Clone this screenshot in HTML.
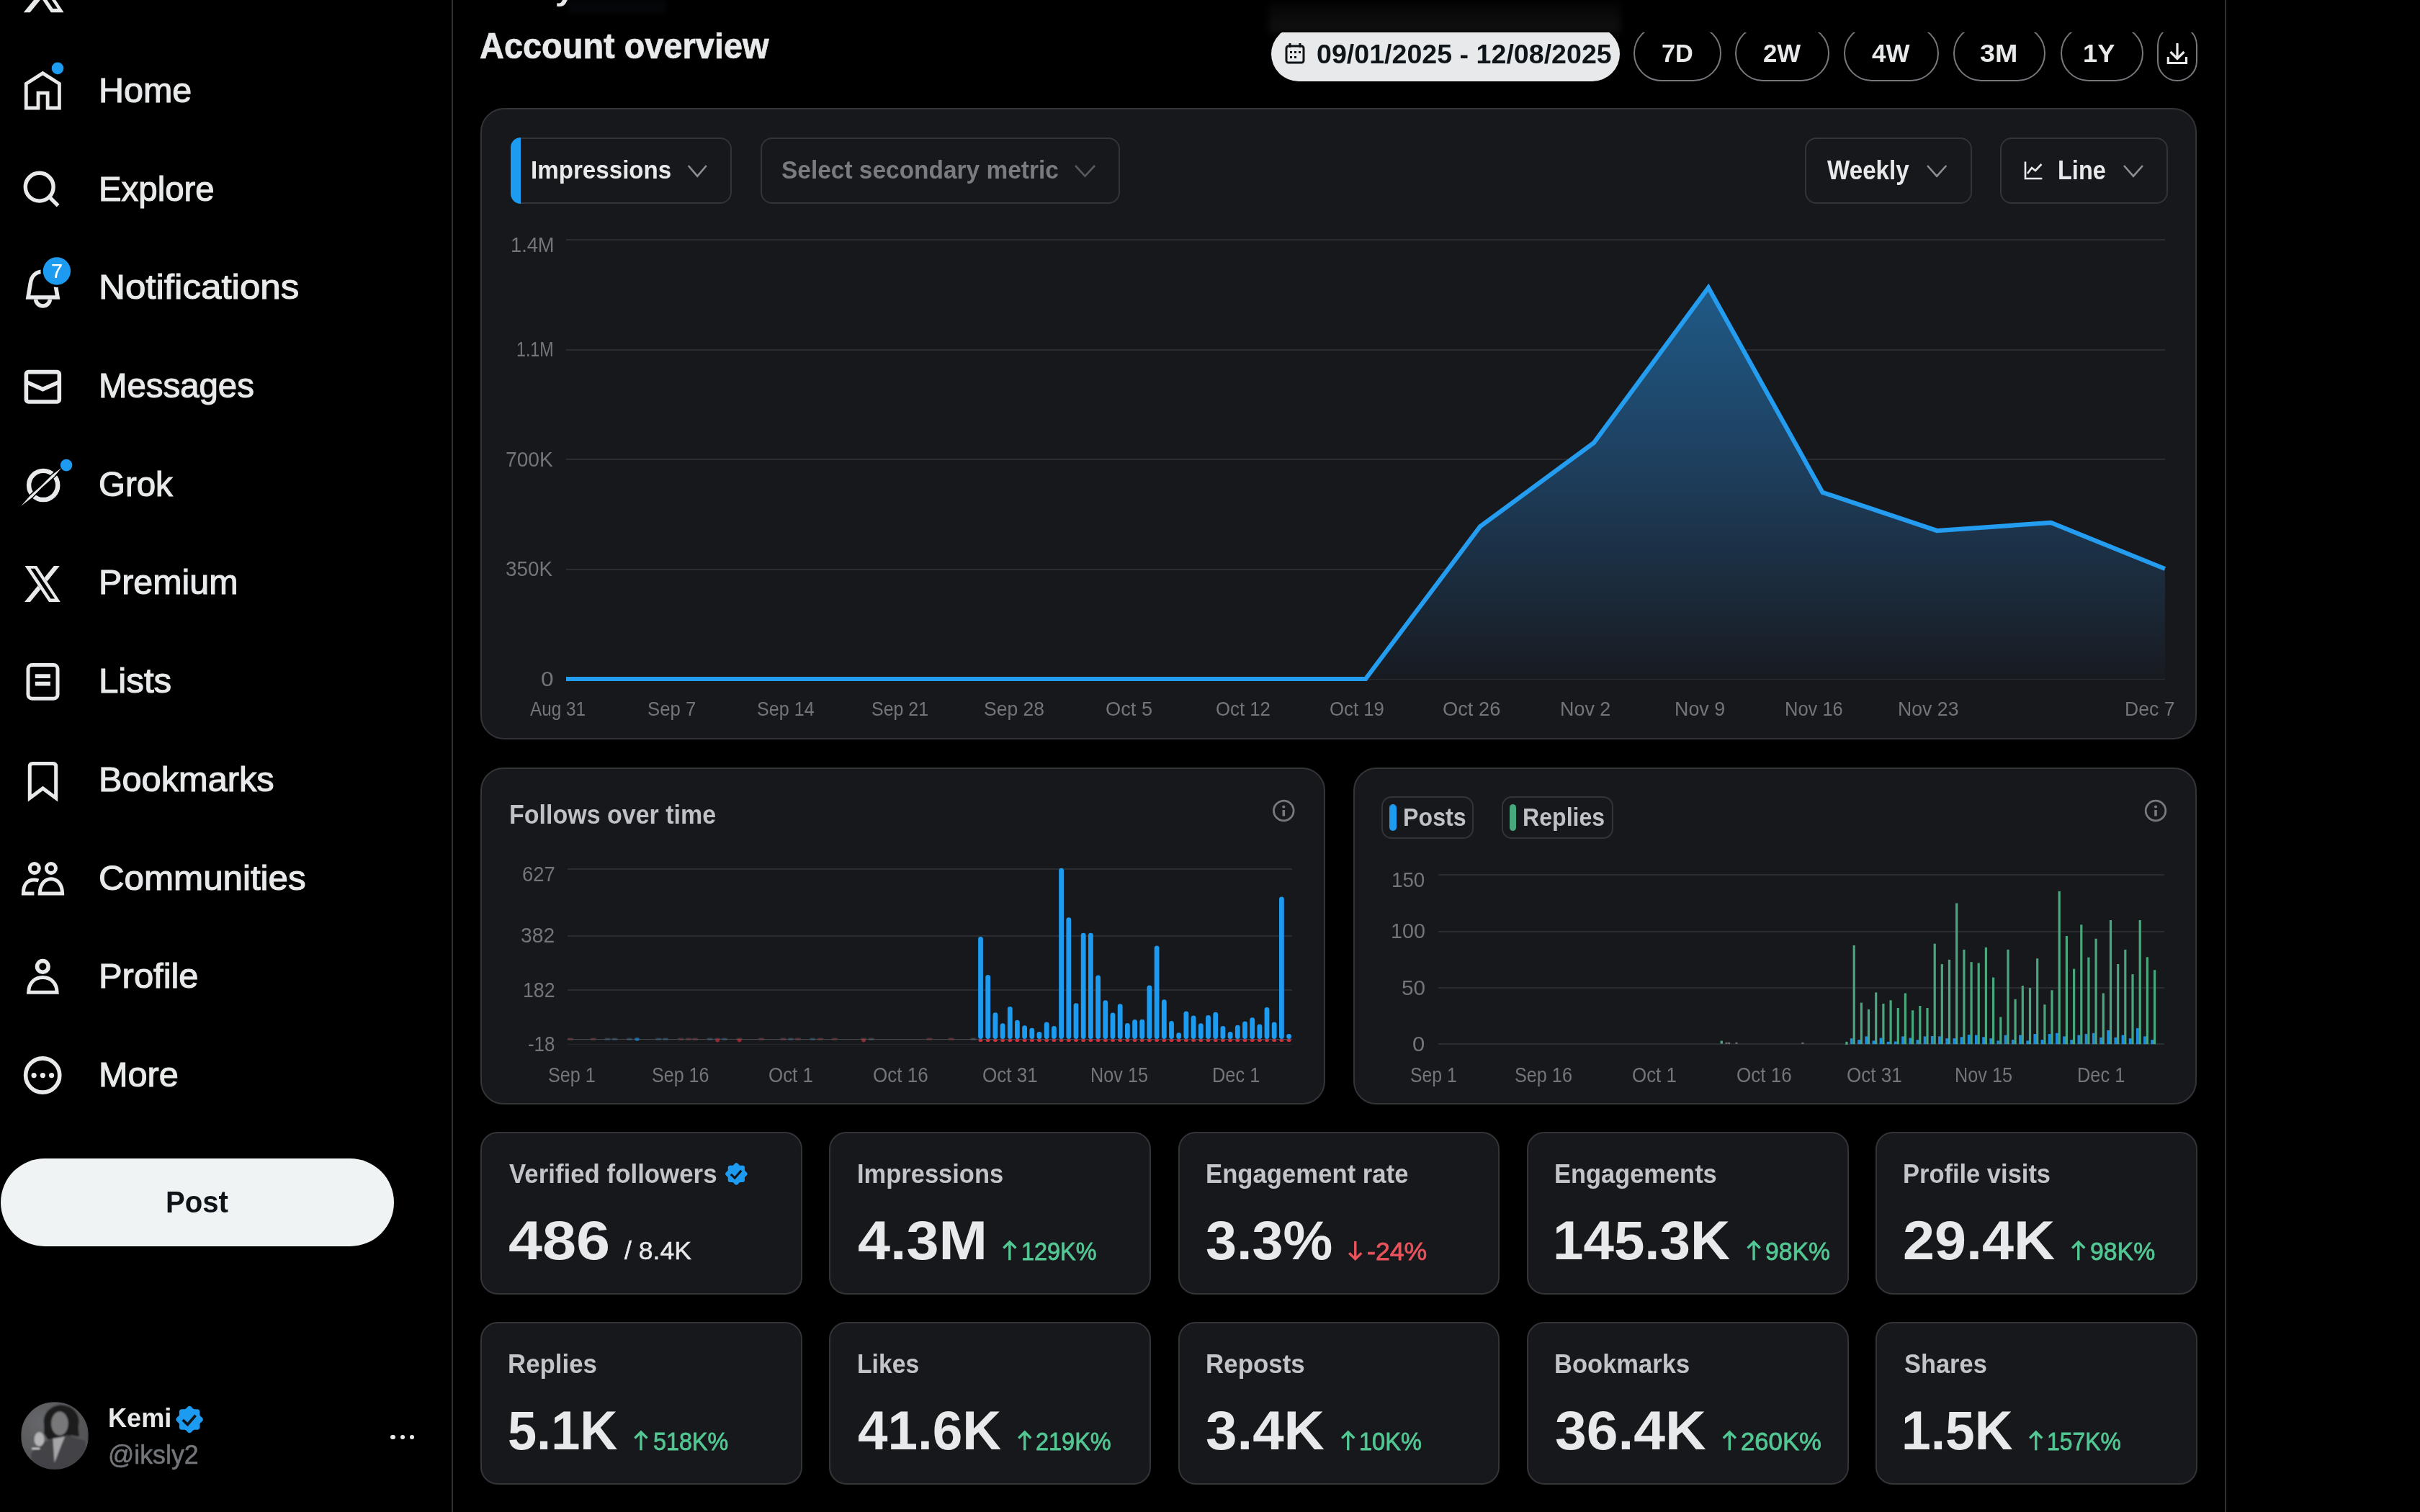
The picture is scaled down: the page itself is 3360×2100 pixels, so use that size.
<!DOCTYPE html><html><head><meta charset="utf-8"><style>
html,body{margin:0;padding:0;background:#000;width:3360px;height:2100px;overflow:hidden;position:relative;font-family:"Liberation Sans",sans-serif}
.t{position:absolute;white-space:nowrap;line-height:1;transform-origin:0 0;font-family:"Liberation Sans",sans-serif}
svg{position:absolute}
</style></head><body>
<div class="t" style="left:137.1px;top:101.9px;font-size:47.82px;color:#e7e9ea;transform:scaleX(1.0135);-webkit-text-stroke:1.1px #e7e9ea">Home</div>
<div class="t" style="left:137.2px;top:238.6px;font-size:47.82px;color:#e7e9ea;transform:scaleX(0.9911);-webkit-text-stroke:1.1px #e7e9ea">Explore</div>
<div class="t" style="left:136.9px;top:375.3px;font-size:47.82px;color:#e7e9ea;transform:scaleX(1.0687);-webkit-text-stroke:1.1px #e7e9ea">Notifications</div>
<div class="t" style="left:137.2px;top:512.0px;font-size:47.82px;color:#e7e9ea;transform:scaleX(0.9905);-webkit-text-stroke:1.1px #e7e9ea">Messages</div>
<div class="t" style="left:137.2px;top:648.7px;font-size:47.82px;color:#e7e9ea;transform:scaleX(0.9923);-webkit-text-stroke:1.1px #e7e9ea">Grok</div>
<div class="t" style="left:137.1px;top:785.4px;font-size:47.82px;color:#e7e9ea;transform:scaleX(1.0114);-webkit-text-stroke:1.1px #e7e9ea">Premium</div>
<div class="t" style="left:137.0px;top:922.1px;font-size:47.82px;color:#e7e9ea;transform:scaleX(1.0294);-webkit-text-stroke:1.1px #e7e9ea">Lists</div>
<div class="t" style="left:137.1px;top:1058.8px;font-size:47.82px;color:#e7e9ea;transform:scaleX(1.0190);-webkit-text-stroke:1.1px #e7e9ea">Bookmarks</div>
<div class="t" style="left:136.8px;top:1195.5px;font-size:47.82px;color:#e7e9ea;transform:scaleX(1.0310);-webkit-text-stroke:1.1px #e7e9ea">Communities</div>
<div class="t" style="left:137.0px;top:1332.2px;font-size:47.82px;color:#e7e9ea;transform:scaleX(1.0224);-webkit-text-stroke:1.1px #e7e9ea">Profile</div>
<div class="t" style="left:137.1px;top:1468.9px;font-size:47.82px;color:#e7e9ea;transform:scaleX(1.0164);-webkit-text-stroke:1.1px #e7e9ea">More</div>
<svg style="position:absolute;left:0px;top:0px;overflow:visible" width="130" height="1560" viewBox="0 0 130 1560"><path fill-rule="evenodd" fill="#e7e9ea" d="M33.30,-38.70 51.89,-38.70 88.52,17.30 70.82,17.30Z M42.26,-34.56 48.87,-34.56 80.00,12.04 73.40,12.04Z"/><polygon fill="#e7e9ea" points="78.55,-38.70 87.40,-38.70 67.68,-14.56 63.76,-20.56"/><polygon fill="#e7e9ea" points="53.68,-8.24 57.72,-2.30 41.64,17.30 32.80,17.30"/><path d="M36.3 150 V116.2 L59.35 101.64 L82.4 116.2 V150 H66.1 V129.2 H53 V150 Z" fill="none" stroke="#e7e9ea" stroke-width="4.8" stroke-linejoin="miter"/><circle cx="80" cy="94.9" r="8.3" fill="#1d9bf0"/><circle cx="54.7" cy="259.7" r="19.4" fill="none" stroke="#e7e9ea" stroke-width="5.4" stroke-linejoin="miter"/><path d="M68.3 273.3 L80.6 285.6" fill="none" stroke="#e7e9ea" stroke-width="5.4" stroke-linejoin="miter"/><path d="M39 413 L42.2 394 C43.5 383 50 377.3 59.5 377.3 C69 377.3 75.5 383 76.8 394 L80 413 Z" fill="none" stroke="#e7e9ea" stroke-width="5.6" stroke-linejoin="miter"/><path d="M49.6 416 A9.95 9.95 0 0 0 69.4 416" fill="none" stroke="#e7e9ea" stroke-width="5.5" stroke-linejoin="miter"/><circle cx="78.9" cy="376.5" r="22.5" fill="#000"/><circle cx="78.9" cy="376.5" r="19.2" fill="#1d9bf0"/><rect x="36.4" y="516.6" width="45.9" height="41.4" rx="3" fill="none" stroke="#e7e9ea" stroke-width="5.6" stroke-linejoin="miter"/><path d="M36.4 530.5 L59.35 540.6 L82.3 530.5" fill="none" stroke="#e7e9ea" stroke-width="5.6" stroke-linejoin="miter"/><circle cx="60.15" cy="673.97" r="20.07" fill="none" stroke="#e7e9ea" stroke-width="6.4"/><polygon fill="#000" points="38.16,698.69 81.75,657.68 77.37,653.02 33.77,694.03"/><polygon fill="#e7e9ea" points="29.26,702.67 44.53,690.91 57.96,677.18 75.27,661.99 85.15,650.09 72.67,659.22 56.45,675.58 41.93,688.14"/><circle cx="92.1" cy="646.1" r="8.3" fill="#1d9bf0"/><path fill-rule="evenodd" fill="#e7e9ea" d="M34.50,786.10 51.10,786.10 83.80,836.10 68.00,836.10Z M42.50,789.80 48.40,789.80 76.20,831.40 70.30,831.40Z"/><polygon fill="#e7e9ea" points="74.90,786.10 82.80,786.10 65.20,807.65 61.70,802.30"/><polygon fill="#e7e9ea" points="52.70,813.30 56.30,818.60 41.95,836.10 34.05,836.10"/><rect x="39" y="923.6" width="41" height="46.6" rx="5.5" fill="none" stroke="#e7e9ea" stroke-width="5.0" stroke-linejoin="miter"/><path d="M48.8 939.2 H69.9 M48.8 949.7 H69.9" fill="none" stroke="#e7e9ea" stroke-width="5.7" stroke-linejoin="miter"/><path d="M41.3 1108.5 V1064.6 Q41.3 1060.6 45.3 1060.6 H73.7 Q77.7 1060.6 77.7 1064.6 V1108.5 L59.5 1094.9 Z" fill="none" stroke="#e7e9ea" stroke-width="5.0" stroke-linejoin="miter"/><circle cx="47.8" cy="1206" r="6.5" fill="none" stroke="#e7e9ea" stroke-width="5.0" stroke-linejoin="miter"/><circle cx="70.9" cy="1206" r="6.5" fill="none" stroke="#e7e9ea" stroke-width="5.0" stroke-linejoin="miter"/><path d="M47.4 1240.9 H32.4 C32.4 1228 38.5 1222 47.5 1222 C49.5 1222 51.5 1222.3 53.5 1223" fill="none" stroke="#e7e9ea" stroke-width="5.0" stroke-linejoin="miter"/><path d="M55.2 1240.9 C55.5 1229 61.5 1220.8 70.9 1220.8 C80.3 1220.8 86.3 1229 86.6 1240.9 Z" fill="none" stroke="#e7e9ea" stroke-width="5.0" stroke-linejoin="miter"/><circle cx="59.35" cy="1342.4" r="7.8" fill="none" stroke="#e7e9ea" stroke-width="5.6" stroke-linejoin="miter"/><path d="M39.6 1378.2 C40 1365 48 1357.6 59.35 1357.6 C70.7 1357.6 78.7 1365 79.1 1378.2 Z" fill="none" stroke="#e7e9ea" stroke-width="5.0" stroke-linejoin="miter"/><circle cx="59.2" cy="1493.5" r="23.6" fill="none" stroke="#e7e9ea" stroke-width="5.6" stroke-linejoin="miter"/><circle cx="47.1" cy="1493.6" r="3.6" fill="#e7e9ea"/><circle cx="59.35" cy="1493.6" r="3.6" fill="#e7e9ea"/><circle cx="71.6" cy="1493.6" r="3.6" fill="#e7e9ea"/></svg>
<div class="t" style="left:70.5px;top:362.6px;font-size:27.62px;color:#fff;transform:scaleX(1.0482);-webkit-text-stroke:0.2px #fff">7</div>
<div style="position:absolute;left:1.0px;top:1609.4px;width:545.8px;height:122.0px;border-radius:61px;background:#eff3f4"></div>
<div class="t" style="left:230.2px;top:1649.4px;font-size:42.30px;font-weight:700;color:#0f1419;transform:scaleX(0.9491);">Post</div>
<svg style="position:absolute;left:28.65px;top:1947px" width="94" height="94" viewBox="-47 -47 94 94">
<defs><clipPath id="avc"><circle cx="0" cy="0" r="47"/></clipPath>
<radialGradient id="avbg" cx="0.3" cy="0.3" r="0.9"><stop offset="0" stop-color="#66676a"/><stop offset="1" stop-color="#4c4d50"/></radialGradient><filter id="avb" x="-10%" y="-10%" width="120%" height="120%"><feGaussianBlur stdDeviation="0.9"/></filter></defs>
<g clip-path="url(#avc)"><g filter="url(#avb)">
<rect x="-47" y="-47" width="94" height="94" fill="url(#avbg)"/>
<ellipse cx="9.09" cy="-19.79" rx="24.5" ry="23" fill="#1c1c1e"/>
<polygon points="-14.91,-3.06 -9.09,5.67 17.10,-1.60 33.83,1.31 31.65,-23.43 -14.91,-23.43" fill="#1c1c1e"/>
<ellipse cx="6.91" cy="-16.88" rx="11.8" ry="16.5" fill="#78787a"/>
<polygon points="-33.83,47.87 -32.38,24.59 -21.46,11.50 -0.36,3.49 17.10,-0.87 41.83,7.13 47.65,47.87" fill="#434346"/>
<polygon points="-2.55,4.22 14.19,1.31 9.82,11.50 -0.36,37.69" fill="#a5a5a7"/>
<ellipse cx="-21.46" cy="4.95" rx="7" ry="10" fill="#b4b4b6"/>
<rect x="-31.65" y="16.95" width="11" height="2" fill="#d8d8d8"/>
</g></g></svg>
<div class="t" style="left:149.5px;top:1951.1px;font-size:37.06px;font-weight:700;color:#e7e9ea;transform:scaleX(0.9753);">Kemi</div>
<svg style="position:absolute;left:0px;top:0px;overflow:visible" width="300" height="2100" viewBox="0 0 300 2100"><polygon points="281.90,1971.50 281.65,1972.72 280.95,1973.85 279.97,1974.86 278.94,1975.75 278.08,1976.58 277.52,1977.47 277.29,1978.50 277.31,1979.70 277.40,1981.06 277.38,1982.46 277.07,1983.75 276.39,1984.79 275.35,1985.47 274.06,1985.78 272.66,1985.80 271.30,1985.71 270.10,1985.69 269.07,1985.92 268.18,1986.48 267.35,1987.34 266.46,1988.37 265.45,1989.35 264.32,1990.05 263.10,1990.30 261.88,1990.05 260.75,1989.35 259.74,1988.37 258.85,1987.34 258.02,1986.48 257.13,1985.92 256.10,1985.69 254.90,1985.71 253.54,1985.80 252.14,1985.78 250.85,1985.47 249.81,1984.79 249.13,1983.75 248.82,1982.46 248.80,1981.06 248.89,1979.70 248.91,1978.50 248.68,1977.47 248.12,1976.58 247.26,1975.75 246.23,1974.86 245.25,1973.85 244.55,1972.72 244.30,1971.50 244.55,1970.28 245.25,1969.15 246.23,1968.14 247.26,1967.25 248.12,1966.42 248.68,1965.53 248.91,1964.50 248.89,1963.30 248.80,1961.94 248.82,1960.54 249.13,1959.25 249.81,1958.21 250.85,1957.53 252.14,1957.22 253.54,1957.20 254.90,1957.29 256.10,1957.31 257.13,1957.08 258.02,1956.52 258.85,1955.66 259.74,1954.63 260.75,1953.65 261.88,1952.95 263.10,1952.70 264.32,1952.95 265.45,1953.65 266.46,1954.63 267.35,1955.66 268.18,1956.52 269.07,1957.08 270.10,1957.31 271.30,1957.29 272.66,1957.20 274.06,1957.22 275.35,1957.53 276.39,1958.21 277.07,1959.25 277.38,1960.54 277.40,1961.94 277.31,1963.30 277.29,1964.50 277.52,1965.53 278.08,1966.42 278.94,1967.25 279.97,1968.14 280.95,1969.15 281.65,1970.28" fill="#1d9bf0"/><path d="M253.70 1972.06 L260.47 1978.46 L271.56 1965.86" fill="none" stroke="#0f1419" stroke-width="3.76"/></svg>
<div class="t" style="left:149.7px;top:2001.6px;font-size:37.06px;color:#737579;transform:scaleX(0.9652);-webkit-text-stroke:0.6px #71767b">@iksly2</div>
<div style="position:absolute;left:542.2px;top:1992.5px;width:6.6px;height:6.6px;border-radius:50%;background:#e7e9ea"></div>
<div style="position:absolute;left:555.5px;top:1992.5px;width:6.6px;height:6.6px;border-radius:50%;background:#e7e9ea"></div>
<div style="position:absolute;left:568.8px;top:1992.5px;width:6.6px;height:6.6px;border-radius:50%;background:#e7e9ea"></div>
<div style="position:absolute;left:627.0px;top:0.0px;width:2.0px;height:2100.0px;background:#2f3336"></div>
<div style="position:absolute;left:3088.5px;top:0.0px;width:2.0px;height:2100.0px;background:#2f3336"></div>
<div class="t" style="left:666.4px;top:40.2px;font-size:49.13px;font-weight:700;color:#e7e9ea;transform:scaleX(0.9550);-webkit-text-stroke:0.7px #e7e9ea">Account overview</div>
<div style="position:absolute;left:1765.0px;top:37.0px;width:484.3px;height:75.5px;border-radius:38px;background:#e7e9ea"></div>
<svg style="position:absolute;left:0px;top:0px;overflow:visible" width="1820" height="100" viewBox="0 0 1820 100"><rect x="1786" y="64" width="24" height="23" rx="3" fill="none" stroke="#0f1419" stroke-width="3"/><path d="M1791 60 V66 M1805 60 V66" stroke="#0f1419" stroke-width="3"/><rect x="1791" y="71" width="3" height="3" fill="#0f1419"/><rect x="1797" y="71" width="3" height="3" fill="#0f1419"/><rect x="1803" y="71" width="3" height="3" fill="#0f1419"/><rect x="1791" y="78" width="3" height="3" fill="#0f1419"/><rect x="1797" y="78" width="3" height="3" fill="#0f1419"/></svg>
<div class="t" style="left:1827.6px;top:56.6px;font-size:37.06px;font-weight:700;color:#0f1419;transform:scaleX(1.0148);">09/01/2025 - 12/08/2025</div>
<div style="position:absolute;left:2268.0px;top:35.0px;width:122.3px;height:78.0px;box-sizing:border-box;border:2px solid #75787d;border-radius:39px;"></div>
<div class="t" style="left:2306.9px;top:56.8px;font-size:35.61px;font-weight:700;color:#e7e9ea;transform:scaleX(0.9627);">7D</div>
<div style="position:absolute;left:2409.0px;top:35.0px;width:130.5px;height:78.0px;box-sizing:border-box;border:2px solid #75787d;border-radius:39px;"></div>
<div class="t" style="left:2447.8px;top:56.8px;font-size:35.61px;font-weight:700;color:#e7e9ea;transform:scaleX(0.9769);">2W</div>
<div style="position:absolute;left:2559.5px;top:35.0px;width:132.5px;height:78.0px;box-sizing:border-box;border:2px solid #75787d;border-radius:39px;"></div>
<div class="t" style="left:2599.1px;top:56.8px;font-size:35.61px;font-weight:700;color:#e7e9ea;transform:scaleX(0.9827);">4W</div>
<div style="position:absolute;left:2712.0px;top:35.0px;width:128.0px;height:78.0px;box-sizing:border-box;border:2px solid #75787d;border-radius:39px;"></div>
<div class="t" style="left:2749.2px;top:56.8px;font-size:35.61px;font-weight:700;color:#e7e9ea;transform:scaleX(1.0568);">3M</div>
<div style="position:absolute;left:2860.5px;top:35.0px;width:115.0px;height:78.0px;box-sizing:border-box;border:2px solid #75787d;border-radius:39px;"></div>
<div class="t" style="left:2892.4px;top:56.8px;font-size:35.61px;font-weight:700;color:#e7e9ea;transform:scaleX(1.0169);">1Y</div>
<div style="position:absolute;left:2994.5px;top:35.0px;width:56.0px;height:78.0px;box-sizing:border-box;border:2px solid #75787d;border-radius:39px;"></div>
<svg style="position:absolute;left:0px;top:0px;overflow:visible" width="3100" height="120" viewBox="0 0 3100 120"><path d="M3023 60 V81 M3013.5 72 L3023 81.5 L3032.5 72" fill="none" stroke="#e7e9ea" stroke-width="3.2"/><path d="M3010.3 79 V87.5 H3035.5 V79" fill="none" stroke="#e7e9ea" stroke-width="3.2"/></svg>
<div style="position:absolute;left:629.0px;top:0.0px;width:2459.5px;height:45.0px;background:#000"></div>
<div style="position:absolute;left:1762.0px;top:4.0px;width:488.0px;height:41.0px;background:linear-gradient(to bottom, rgba(255,255,255,0.02), rgba(255,255,255,0.065));filter:blur(5px)"></div>
<div style="position:absolute;left:789.0px;top:0.0px;width:135.0px;height:18.0px;background:rgba(20,24,34,0.25);filter:blur(3px)"></div>
<div class="t" style="left:666.1px;top:-37.6px;font-size:45.06px;font-weight:700;color:#e7e9ea;transform:scaleX(1.0737);">Analytics</div>
<div style="position:absolute;left:667.0px;top:150.0px;width:2383.0px;height:877.0px;box-sizing:border-box;border:2px solid #323438;border-radius:33px;background:#17181c"></div>
<div style="position:absolute;left:709.0px;top:191.0px;width:307.0px;height:91.5px;box-sizing:border-box;border:2px solid #323438;border-radius:16px;"></div>
<div style="position:absolute;left:709.0px;top:191.0px;width:14.0px;height:91.5px;background:#1d9bf0;border-radius:16px 0 0 16px"></div>
<div class="t" style="left:736.6px;top:218.5px;font-size:35.61px;font-weight:700;color:#e7e9ea;transform:scaleX(0.9309);">Impressions</div>
<svg style="position:absolute;left:0px;top:0px;overflow:visible" width="3100" height="300" viewBox="0 0 3100 300"><path d="M955.7 230 L968.25 244.7 L980.8 230" fill="none" stroke="#8b8f94" stroke-width="2.6"/></svg>
<div style="position:absolute;left:1056.0px;top:191.0px;width:498.5px;height:91.5px;box-sizing:border-box;border:2px solid #323438;border-radius:16px;"></div>
<div class="t" style="left:1085.1px;top:218.5px;font-size:35.61px;font-weight:700;color:#7a7b7f;transform:scaleX(0.9393);">Select secondary metric</div>
<svg style="position:absolute;left:0px;top:0px;overflow:visible" width="3100" height="300" viewBox="0 0 3100 300"><path d="M1493 230 L1506.5 244.7 L1520 230" fill="none" stroke="#58595d" stroke-width="2.6"/></svg>
<div style="position:absolute;left:2506.0px;top:191.0px;width:232.4px;height:91.5px;box-sizing:border-box;border:2px solid #323438;border-radius:16px;"></div>
<div class="t" style="left:2537.4px;top:218.8px;font-size:36.05px;font-weight:700;color:#e7e9ea;transform:scaleX(0.9204);">Weekly</div>
<svg style="position:absolute;left:0px;top:0px;overflow:visible" width="3100" height="300" viewBox="0 0 3100 300"><path d="M2676 230 L2689.15 244.7 L2702.3 230" fill="none" stroke="#8b8f94" stroke-width="2.6"/></svg>
<div style="position:absolute;left:2777.0px;top:191.0px;width:233.4px;height:91.5px;box-sizing:border-box;border:2px solid #323438;border-radius:16px;"></div>
<svg style="position:absolute;left:0px;top:0px;overflow:visible" width="3100" height="300" viewBox="0 0 3100 300"><path d="M2812 224.5 V248 H2835.4" fill="none" stroke="#e7e9ea" stroke-width="2.6"/><path d="M2815 241 L2821 233 L2826 237 L2834.5 228" fill="none" stroke="#e7e9ea" stroke-width="2.6"/></svg>
<div class="t" style="left:2857.3px;top:218.8px;font-size:36.05px;font-weight:700;color:#e7e9ea;transform:scaleX(0.9020);">Line</div>
<svg style="position:absolute;left:0px;top:0px;overflow:visible" width="3100" height="300" viewBox="0 0 3100 300"><path d="M2949 230 L2962.0 244.7 L2975 230" fill="none" stroke="#8b8f94" stroke-width="2.6"/></svg>
<div style="position:absolute;left:786.0px;top:332.0px;width:2220.0px;height:2.0px;background:#2a2c30"></div>
<div style="position:absolute;left:786.0px;top:484.5px;width:2220.0px;height:2.0px;background:#2a2c30"></div>
<div style="position:absolute;left:786.0px;top:637.0px;width:2220.0px;height:2.0px;background:#2a2c30"></div>
<div style="position:absolute;left:786.0px;top:789.5px;width:2220.0px;height:2.0px;background:#2a2c30"></div>
<div style="position:absolute;left:786.0px;top:942.0px;width:2220.0px;height:2.0px;background:#2a2c30"></div>
<div class="t" style="left:708.6px;top:325.7px;font-size:28.63px;color:#737579;transform:scaleX(0.9517);">1.4M</div>
<div class="t" style="left:717.2px;top:471.2px;font-size:28.63px;color:#737579;transform:scaleX(0.8114);">1.1M</div>
<div class="t" style="left:701.6px;top:623.7px;font-size:28.63px;color:#737579;transform:scaleX(0.9829);">700K</div>
<div class="t" style="left:702.3px;top:776.2px;font-size:28.63px;color:#737579;transform:scaleX(0.9716);">350K</div>
<div class="t" style="left:750.6px;top:928.7px;font-size:28.63px;color:#737579;transform:scaleX(1.1059);">0</div>
<div class="t" style="left:736.2px;top:971.4px;font-size:27.91px;color:#737579;transform:scaleX(0.8706);">Aug 31</div>
<div class="t" style="left:899.2px;top:971.4px;font-size:27.91px;color:#737579;transform:scaleX(0.9214);">Sep 7</div>
<div class="t" style="left:1051.3px;top:971.4px;font-size:27.91px;color:#737579;transform:scaleX(0.8999);">Sep 14</div>
<div class="t" style="left:1210.4px;top:971.4px;font-size:27.91px;color:#737579;transform:scaleX(0.8941);">Sep 21</div>
<div class="t" style="left:1366.4px;top:971.4px;font-size:27.91px;color:#737579;transform:scaleX(0.9504);">Sep 28</div>
<div class="t" style="left:1534.5px;top:971.4px;font-size:27.91px;color:#737579;transform:scaleX(0.9752);">Oct 5</div>
<div class="t" style="left:1687.8px;top:971.4px;font-size:27.91px;color:#737579;transform:scaleX(0.9229);">Oct 12</div>
<div class="t" style="left:1846.3px;top:971.4px;font-size:27.91px;color:#737579;transform:scaleX(0.9241);">Oct 19</div>
<div class="t" style="left:2002.6px;top:971.4px;font-size:27.91px;color:#737579;transform:scaleX(0.9780);">Oct 26</div>
<div class="t" style="left:2165.9px;top:971.4px;font-size:27.91px;color:#737579;transform:scaleX(0.9637);">Nov 2</div>
<div class="t" style="left:2324.5px;top:971.4px;font-size:27.91px;color:#737579;transform:scaleX(0.9622);">Nov 9</div>
<div class="t" style="left:2477.8px;top:971.4px;font-size:27.91px;color:#737579;transform:scaleX(0.9135);">Nov 16</div>
<div class="t" style="left:2634.5px;top:971.4px;font-size:27.91px;color:#737579;transform:scaleX(0.9559);">Nov 23</div>
<div class="t" style="left:2950.1px;top:971.4px;font-size:27.91px;color:#737579;transform:scaleX(0.9551);">Dec 7</div>
<svg style="position:absolute;left:0;top:0" width="3360" height="1100" viewBox="0 0 3360 1100">
<defs><linearGradient id="ag" x1="0" y1="400" x2="0" y2="942" gradientUnits="userSpaceOnUse">
<stop offset="0" stop-color="#1f5a87"/><stop offset="0.45" stop-color="#1e3f5e"/><stop offset="1" stop-color="#181b21"/></linearGradient></defs>
<polygon points="786.0,943.0 944.6,943.0 1103.1,943.0 1261.7,943.0 1420.3,943.0 1578.8,943.0 1737.4,943.0 1896.0,943.0 2055.1,731.2 2212.9,615.1 2372.0,399.5 2530.5,683.9 2689.3,737.0 2847.6,726.0 3005.9,790.0 3005.9,943 786,943" fill="url(#ag)"/>
<polyline points="786.0,943.0 944.6,943.0 1103.1,943.0 1261.7,943.0 1420.3,943.0 1578.8,943.0 1737.4,943.0 1896.0,943.0 2055.1,731.2 2212.9,615.1 2372.0,399.5 2530.5,683.9 2689.3,737.0 2847.6,726.0 3005.9,790.0" fill="none" stroke="#249cf0" stroke-width="6.2" stroke-linejoin="miter"/>
</svg>
<div style="position:absolute;left:667.0px;top:1065.5px;width:1172.5px;height:468.5px;box-sizing:border-box;border:2px solid #323438;border-radius:32px;background:#17181c"></div>
<div class="t" style="left:706.8px;top:1113.7px;font-size:36.92px;font-weight:700;color:#bfc1c5;transform:scaleX(0.9211);">Follows over time</div>
<svg style="position:absolute;left:0px;top:0px;overflow:visible" width="3360" height="2100" viewBox="0 0 3360 2100"><circle cx="1782.3" cy="1126" r="13.8" fill="none" stroke="#76797e" stroke-width="2.8"/><circle cx="1782.3" cy="1120.5" r="2.1" fill="#76797e"/><path d="M1782.3 1125 V1133.5" stroke="#76797e" stroke-width="3.6"/></svg>
<div style="position:absolute;left:788.0px;top:1205.8px;width:1005.5px;height:2.0px;background:#2a2c30"></div>
<div style="position:absolute;left:788.0px;top:1298.5px;width:1005.5px;height:2.0px;background:#2a2c30"></div>
<div style="position:absolute;left:788.0px;top:1373.8px;width:1005.5px;height:2.0px;background:#2a2c30"></div>
<div style="position:absolute;left:788.0px;top:1449.7px;width:1005.5px;height:1.6px;background:#25272b"></div>
<div class="t" style="left:724.5px;top:1200.4px;font-size:28.63px;color:#737579;transform:scaleX(0.9600);">627</div>
<div class="t" style="left:723.3px;top:1284.7px;font-size:28.63px;color:#737579;transform:scaleX(0.9858);">382</div>
<div class="t" style="left:725.8px;top:1361.1px;font-size:28.63px;color:#737579;transform:scaleX(0.9331);">182</div>
<div class="t" style="left:732.7px;top:1436.4px;font-size:28.63px;color:#737579;transform:scaleX(0.9039);">-18</div>
<div class="t" style="left:760.5px;top:1478.5px;font-size:28.78px;color:#737579;transform:scaleX(0.8749);">Sep 1</div>
<div class="t" style="left:905.2px;top:1478.5px;font-size:28.78px;color:#737579;transform:scaleX(0.8721);">Sep 16</div>
<div class="t" style="left:1066.9px;top:1478.5px;font-size:28.78px;color:#737579;transform:scaleX(0.9005);">Oct 1</div>
<div class="t" style="left:1211.6px;top:1478.5px;font-size:28.78px;color:#737579;transform:scaleX(0.9046);">Oct 16</div>
<div class="t" style="left:1363.9px;top:1478.5px;font-size:28.78px;color:#737579;transform:scaleX(0.9065);">Oct 31</div>
<div class="t" style="left:1514.3px;top:1478.5px;font-size:28.78px;color:#737579;transform:scaleX(0.8772);">Nov 15</div>
<div class="t" style="left:1683.4px;top:1478.5px;font-size:28.78px;color:#737579;transform:scaleX(0.8820);">Dec 1</div>
<div style="position:absolute;left:788.0px;top:1442.5px;width:1005.5px;height:1.5px;background:#45474b"></div>
<svg style="position:absolute;left:0;top:0;opacity:0.65" width="3360" height="2100"><rect x="787.5" y="1441.4" width="9" height="3.6" rx="1.8" fill="#46494d"/><rect x="789.5" y="1442.4" width="5" height="1.8" fill="#9a3038"/><rect x="819.1" y="1441.4" width="9" height="3.6" rx="1.8" fill="#46494d"/><rect x="821.1" y="1442.4" width="5" height="1.8" fill="#9a3038"/><rect x="839.0" y="1441.4" width="9" height="3.6" rx="1.8" fill="#46494d"/><rect x="841.0" y="1442.4" width="5" height="1.8" fill="#2a6a9c"/><rect x="848.9" y="1441.4" width="9" height="3.6" rx="1.8" fill="#46494d"/><rect x="850.9" y="1442.4" width="5" height="1.8" fill="#2a6a9c"/><rect x="869.4" y="1441.4" width="9" height="3.6" rx="1.8" fill="#46494d"/><rect x="871.4" y="1442.4" width="5" height="1.8" fill="#2a6a9c"/><rect x="880.0" y="1441.4" width="9" height="3.6" rx="1.8" fill="#46494d"/><ellipse cx="884.5" cy="1443.5" rx="2.8" ry="2.4" fill="#1d8fe0"/><rect x="909.7" y="1441.4" width="9" height="3.6" rx="1.8" fill="#46494d"/><rect x="911.7" y="1442.4" width="5" height="1.8" fill="#2a6a9c"/><rect x="919.6" y="1441.4" width="9" height="3.6" rx="1.8" fill="#46494d"/><rect x="921.6" y="1442.4" width="5" height="1.8" fill="#2a6a9c"/><rect x="940.8" y="1441.4" width="9" height="3.6" rx="1.8" fill="#46494d"/><rect x="942.8" y="1442.4" width="5" height="1.8" fill="#9a3038"/><rect x="951.4" y="1441.4" width="9" height="3.6" rx="1.8" fill="#46494d"/><rect x="953.4" y="1442.4" width="5" height="1.8" fill="#9a3038"/><rect x="960.6" y="1441.4" width="9" height="3.6" rx="1.8" fill="#46494d"/><rect x="962.6" y="1442.4" width="5" height="1.8" fill="#9a3038"/><rect x="981.1" y="1441.4" width="9" height="3.6" rx="1.8" fill="#46494d"/><rect x="983.1" y="1442.4" width="5" height="1.8" fill="#2a6a9c"/><rect x="991.7" y="1441.4" width="9" height="3.6" rx="1.8" fill="#46494d"/><ellipse cx="996.2" cy="1445.0" rx="2.8" ry="2.4" fill="#d0343f"/><rect x="1001.6" y="1441.4" width="9" height="3.6" rx="1.8" fill="#46494d"/><rect x="1003.6" y="1442.4" width="5" height="1.8" fill="#2a6a9c"/><rect x="1022.1" y="1441.4" width="9" height="3.6" rx="1.8" fill="#46494d"/><ellipse cx="1026.6" cy="1445.0" rx="2.8" ry="2.4" fill="#d0343f"/><rect x="1052.5" y="1441.4" width="9" height="3.6" rx="1.8" fill="#46494d"/><rect x="1054.5" y="1442.4" width="5" height="1.8" fill="#9a3038"/><rect x="1082.9" y="1441.4" width="9" height="3.6" rx="1.8" fill="#46494d"/><rect x="1084.9" y="1442.4" width="5" height="1.8" fill="#9a3038"/><rect x="1093.4" y="1441.4" width="9" height="3.6" rx="1.8" fill="#46494d"/><rect x="1095.4" y="1442.4" width="5" height="1.8" fill="#2a6a9c"/><rect x="1103.4" y="1441.4" width="9" height="3.6" rx="1.8" fill="#46494d"/><rect x="1105.4" y="1442.4" width="5" height="1.8" fill="#9a3038"/><rect x="1123.8" y="1441.4" width="9" height="3.6" rx="1.8" fill="#46494d"/><rect x="1125.8" y="1442.4" width="5" height="1.8" fill="#2a6a9c"/><rect x="1134.4" y="1441.4" width="9" height="3.6" rx="1.8" fill="#46494d"/><rect x="1136.4" y="1442.4" width="5" height="1.8" fill="#9a3038"/><rect x="1154.3" y="1441.4" width="9" height="3.6" rx="1.8" fill="#46494d"/><rect x="1156.3" y="1442.4" width="5" height="1.8" fill="#9a3038"/><rect x="1194.6" y="1441.4" width="9" height="3.6" rx="1.8" fill="#46494d"/><ellipse cx="1199.1" cy="1445.0" rx="2.8" ry="2.4" fill="#d0343f"/><rect x="1205.2" y="1441.4" width="9" height="3.6" rx="1.8" fill="#46494d"/><rect x="1207.2" y="1442.4" width="5" height="1.8" fill="#5a5d61"/><rect x="1285.8" y="1441.4" width="9" height="3.6" rx="1.8" fill="#46494d"/><rect x="1287.8" y="1442.4" width="5" height="1.8" fill="#9a3038"/><rect x="1316.2" y="1441.4" width="9" height="3.6" rx="1.8" fill="#46494d"/><rect x="1318.2" y="1442.4" width="5" height="1.8" fill="#9a3038"/><rect x="1346.7" y="1441.4" width="9" height="3.6" rx="1.8" fill="#46494d"/><rect x="1348.7" y="1442.4" width="5" height="1.8" fill="#5a5d61"/></svg>
<svg style="position:absolute;left:0;top:0" width="3360" height="2100"><rect x="1358.1" y="1301.1" width="6.8" height="141.9" rx="3.4" fill="#1d9bf0"/><rect x="1358.5" y="1443.3" width="6" height="3.6" rx="1.8" fill="#c9343e"/><rect x="1368.3" y="1354.0" width="6.8" height="89.0" rx="3.4" fill="#1d9bf0"/><rect x="1368.7" y="1443.3" width="6" height="3.6" rx="1.8" fill="#c9343e"/><rect x="1378.5" y="1406.3" width="6.8" height="36.7" rx="3.4" fill="#1d9bf0"/><rect x="1378.9" y="1443.3" width="6" height="3.6" rx="1.8" fill="#c9343e"/><rect x="1388.7" y="1421.3" width="6.8" height="21.7" rx="3.4" fill="#1d9bf0"/><rect x="1389.1" y="1443.3" width="6" height="3.6" rx="1.8" fill="#c9343e"/><rect x="1398.9" y="1398.1" width="6.8" height="44.9" rx="3.4" fill="#1d9bf0"/><rect x="1399.3" y="1443.3" width="6" height="3.6" rx="1.8" fill="#c9343e"/><rect x="1409.0" y="1416.7" width="6.8" height="26.3" rx="3.4" fill="#1d9bf0"/><rect x="1409.4" y="1443.3" width="6" height="3.6" rx="1.8" fill="#c9343e"/><rect x="1419.2" y="1424.3" width="6.8" height="18.7" rx="3.4" fill="#1d9bf0"/><rect x="1419.6" y="1443.3" width="6" height="3.6" rx="1.8" fill="#c9343e"/><rect x="1429.4" y="1427.7" width="6.8" height="15.3" rx="3.4" fill="#1d9bf0"/><rect x="1429.8" y="1443.3" width="6" height="3.6" rx="1.8" fill="#c9343e"/><rect x="1439.6" y="1432.9" width="6.8" height="10.1" rx="3.4" fill="#1d9bf0"/><rect x="1440.0" y="1443.3" width="6" height="3.6" rx="1.8" fill="#c9343e"/><rect x="1449.8" y="1419.6" width="6.8" height="23.4" rx="3.4" fill="#1d9bf0"/><rect x="1450.2" y="1443.3" width="6" height="3.6" rx="1.8" fill="#c9343e"/><rect x="1460.0" y="1425.1" width="6.8" height="17.9" rx="3.4" fill="#1d9bf0"/><rect x="1460.4" y="1443.3" width="6" height="3.6" rx="1.8" fill="#c9343e"/><rect x="1470.2" y="1205.7" width="6.8" height="237.3" rx="3.4" fill="#1d9bf0"/><rect x="1470.6" y="1443.3" width="6" height="3.6" rx="1.8" fill="#c9343e"/><rect x="1480.4" y="1274.3" width="6.8" height="168.7" rx="3.4" fill="#1d9bf0"/><rect x="1480.8" y="1443.3" width="6" height="3.6" rx="1.8" fill="#c9343e"/><rect x="1490.6" y="1393.3" width="6.8" height="49.7" rx="3.4" fill="#1d9bf0"/><rect x="1491.0" y="1443.3" width="6" height="3.6" rx="1.8" fill="#c9343e"/><rect x="1500.8" y="1295.8" width="6.8" height="147.2" rx="3.4" fill="#1d9bf0"/><rect x="1501.2" y="1443.3" width="6" height="3.6" rx="1.8" fill="#c9343e"/><rect x="1511.0" y="1295.8" width="6.8" height="147.2" rx="3.4" fill="#1d9bf0"/><rect x="1511.4" y="1443.3" width="6" height="3.6" rx="1.8" fill="#c9343e"/><rect x="1521.2" y="1354.4" width="6.8" height="88.6" rx="3.4" fill="#1d9bf0"/><rect x="1521.6" y="1443.3" width="6" height="3.6" rx="1.8" fill="#c9343e"/><rect x="1531.4" y="1389.2" width="6.8" height="53.8" rx="3.4" fill="#1d9bf0"/><rect x="1531.8" y="1443.3" width="6" height="3.6" rx="1.8" fill="#c9343e"/><rect x="1541.6" y="1406.6" width="6.8" height="36.4" rx="3.4" fill="#1d9bf0"/><rect x="1542.0" y="1443.3" width="6" height="3.6" rx="1.8" fill="#c9343e"/><rect x="1551.8" y="1394.3" width="6.8" height="48.7" rx="3.4" fill="#1d9bf0"/><rect x="1552.2" y="1443.3" width="6" height="3.6" rx="1.8" fill="#c9343e"/><rect x="1562.0" y="1420.9" width="6.8" height="22.1" rx="3.4" fill="#1d9bf0"/><rect x="1562.4" y="1443.3" width="6" height="3.6" rx="1.8" fill="#c9343e"/><rect x="1572.2" y="1416.1" width="6.8" height="26.9" rx="3.4" fill="#1d9bf0"/><rect x="1572.6" y="1443.3" width="6" height="3.6" rx="1.8" fill="#c9343e"/><rect x="1582.3" y="1415.8" width="6.8" height="27.2" rx="3.4" fill="#1d9bf0"/><rect x="1582.7" y="1443.3" width="6" height="3.6" rx="1.8" fill="#c9343e"/><rect x="1592.5" y="1368.6" width="6.8" height="74.4" rx="3.4" fill="#1d9bf0"/><rect x="1592.9" y="1443.3" width="6" height="3.6" rx="1.8" fill="#c9343e"/><rect x="1602.7" y="1313.5" width="6.8" height="129.5" rx="3.4" fill="#1d9bf0"/><rect x="1603.1" y="1443.3" width="6" height="3.6" rx="1.8" fill="#c9343e"/><rect x="1612.9" y="1388.2" width="6.8" height="54.8" rx="3.4" fill="#1d9bf0"/><rect x="1613.3" y="1443.3" width="6" height="3.6" rx="1.8" fill="#c9343e"/><rect x="1623.1" y="1418.0" width="6.8" height="25.0" rx="3.4" fill="#1d9bf0"/><rect x="1623.5" y="1443.3" width="6" height="3.6" rx="1.8" fill="#c9343e"/><rect x="1633.3" y="1434.2" width="6.8" height="8.8" rx="3.4" fill="#1d9bf0"/><rect x="1633.7" y="1443.3" width="6" height="3.6" rx="1.8" fill="#c9343e"/><rect x="1643.5" y="1404.4" width="6.8" height="38.6" rx="3.4" fill="#1d9bf0"/><rect x="1643.9" y="1443.3" width="6" height="3.6" rx="1.8" fill="#c9343e"/><rect x="1653.7" y="1410.6" width="6.8" height="32.4" rx="3.4" fill="#1d9bf0"/><rect x="1654.1" y="1443.3" width="6" height="3.6" rx="1.8" fill="#c9343e"/><rect x="1663.9" y="1421.3" width="6.8" height="21.7" rx="3.4" fill="#1d9bf0"/><rect x="1664.3" y="1443.3" width="6" height="3.6" rx="1.8" fill="#c9343e"/><rect x="1674.1" y="1410.1" width="6.8" height="32.9" rx="3.4" fill="#1d9bf0"/><rect x="1674.5" y="1443.3" width="6" height="3.6" rx="1.8" fill="#c9343e"/><rect x="1684.3" y="1405.7" width="6.8" height="37.3" rx="3.4" fill="#1d9bf0"/><rect x="1684.7" y="1443.3" width="6" height="3.6" rx="1.8" fill="#c9343e"/><rect x="1694.5" y="1425.1" width="6.8" height="17.9" rx="3.4" fill="#1d9bf0"/><rect x="1694.9" y="1443.3" width="6" height="3.6" rx="1.8" fill="#c9343e"/><rect x="1704.7" y="1432.9" width="6.8" height="10.1" rx="3.4" fill="#1d9bf0"/><rect x="1705.1" y="1443.3" width="6" height="3.6" rx="1.8" fill="#c9343e"/><rect x="1714.9" y="1423.8" width="6.8" height="19.2" rx="3.4" fill="#1d9bf0"/><rect x="1715.3" y="1443.3" width="6" height="3.6" rx="1.8" fill="#c9343e"/><rect x="1725.1" y="1418.6" width="6.8" height="24.4" rx="3.4" fill="#1d9bf0"/><rect x="1725.5" y="1443.3" width="6" height="3.6" rx="1.8" fill="#c9343e"/><rect x="1735.3" y="1413.3" width="6.8" height="29.7" rx="3.4" fill="#1d9bf0"/><rect x="1735.7" y="1443.3" width="6" height="3.6" rx="1.8" fill="#c9343e"/><rect x="1745.5" y="1422.4" width="6.8" height="20.6" rx="3.4" fill="#1d9bf0"/><rect x="1745.9" y="1443.3" width="6" height="3.6" rx="1.8" fill="#c9343e"/><rect x="1755.6" y="1399.0" width="6.8" height="44.0" rx="3.4" fill="#1d9bf0"/><rect x="1756.0" y="1443.3" width="6" height="3.6" rx="1.8" fill="#c9343e"/><rect x="1765.8" y="1419.6" width="6.8" height="23.4" rx="3.4" fill="#1d9bf0"/><rect x="1766.2" y="1443.3" width="6" height="3.6" rx="1.8" fill="#c9343e"/><rect x="1776.0" y="1245.6" width="6.8" height="197.4" rx="3.4" fill="#1d9bf0"/><rect x="1776.4" y="1443.3" width="6" height="3.6" rx="1.8" fill="#c9343e"/><rect x="1786.2" y="1436.1" width="6.8" height="6.9" rx="3.4" fill="#1d9bf0"/><rect x="1786.6" y="1443.3" width="6" height="3.6" rx="1.8" fill="#c9343e"/></svg>
<div style="position:absolute;left:1878.5px;top:1065.5px;width:1171.5px;height:468.5px;box-sizing:border-box;border:2px solid #323438;border-radius:32px;background:#17181c"></div>
<div style="position:absolute;left:1918.2px;top:1105.6px;width:127.6px;height:59.9px;box-sizing:border-box;border:2px solid #323438;border-radius:14px"></div>
<div style="position:absolute;left:1929.3px;top:1117.0px;width:9.5px;height:37.4px;border-radius:5px;background:#1d9bf0"></div>
<div class="t" style="left:1947.5px;top:1117.6px;font-size:35.61px;font-weight:700;color:#bfc1c5;transform:scaleX(0.9042);">Posts</div>
<div style="position:absolute;left:2084.6px;top:1105.6px;width:155.1px;height:59.9px;box-sizing:border-box;border:2px solid #323438;border-radius:14px"></div>
<div style="position:absolute;left:2095.9px;top:1117.0px;width:9.4px;height:37.4px;border-radius:5px;background:#48a77c"></div>
<div class="t" style="left:2114.4px;top:1117.6px;font-size:35.61px;font-weight:700;color:#bfc1c5;transform:scaleX(0.9013);">Replies</div>
<svg style="position:absolute;left:0px;top:0px;overflow:visible" width="3360" height="2100" viewBox="0 0 3360 2100"><circle cx="2993" cy="1126" r="13.8" fill="none" stroke="#76797e" stroke-width="2.8"/><circle cx="2993" cy="1120.5" r="2.1" fill="#76797e"/><path d="M2993 1125 V1133.5" stroke="#76797e" stroke-width="3.6"/></svg>
<div style="position:absolute;left:1997.4px;top:1213.7px;width:1008.0px;height:2.0px;background:#2a2c30"></div>
<div style="position:absolute;left:1997.4px;top:1292.8px;width:1008.0px;height:2.0px;background:#2a2c30"></div>
<div style="position:absolute;left:1997.4px;top:1370.7px;width:1008.0px;height:2.0px;background:#2a2c30"></div>
<div style="position:absolute;left:1997.4px;top:1449.2px;width:1008.0px;height:2.0px;background:#2a2c30"></div>
<div class="t" style="left:1932.3px;top:1208.3px;font-size:28.63px;color:#737579;transform:scaleX(0.9686);">150</div>
<div class="t" style="left:1930.7px;top:1278.7px;font-size:28.63px;color:#737579;transform:scaleX(1.0023);">100</div>
<div class="t" style="left:1945.6px;top:1358.1px;font-size:28.63px;color:#737579;transform:scaleX(1.0369);">50</div>
<div class="t" style="left:1961.4px;top:1436.4px;font-size:28.63px;color:#737579;transform:scaleX(1.0841);">0</div>
<div class="t" style="left:1958.1px;top:1478.5px;font-size:28.78px;color:#737579;transform:scaleX(0.8611);">Sep 1</div>
<div class="t" style="left:2103.4px;top:1478.5px;font-size:28.78px;color:#737579;transform:scaleX(0.8766);">Sep 16</div>
<div class="t" style="left:2265.5px;top:1478.5px;font-size:28.78px;color:#737579;transform:scaleX(0.9005);">Oct 1</div>
<div class="t" style="left:2410.6px;top:1478.5px;font-size:28.78px;color:#737579;transform:scaleX(0.9046);">Oct 16</div>
<div class="t" style="left:2563.9px;top:1478.5px;font-size:28.78px;color:#737579;transform:scaleX(0.9065);">Oct 31</div>
<div class="t" style="left:2714.3px;top:1478.5px;font-size:28.78px;color:#737579;transform:scaleX(0.8772);">Nov 15</div>
<div class="t" style="left:2884.4px;top:1478.5px;font-size:28.78px;color:#737579;transform:scaleX(0.8820);">Dec 1</div>
<svg style="position:absolute;left:0;top:0" width="3360" height="2100"><rect x="2568.9" y="1442.2" width="3.8" height="8.0" fill="#1d8fe0"/><rect x="2572.6" y="1313.0" width="3.2" height="137.2" fill="#4aa67d"/><rect x="2579.1" y="1444.1" width="3.8" height="6.1" fill="#1d8fe0"/><rect x="2582.8" y="1392.6" width="3.2" height="57.6" fill="#4aa67d"/><rect x="2589.3" y="1439.4" width="3.8" height="10.8" fill="#1d8fe0"/><rect x="2592.9" y="1401.9" width="3.2" height="48.3" fill="#4aa67d"/><rect x="2599.5" y="1445.4" width="3.8" height="4.8" fill="#1d8fe0"/><rect x="2603.1" y="1378.4" width="3.2" height="71.8" fill="#4aa67d"/><rect x="2609.6" y="1441.6" width="3.8" height="8.6" fill="#1d8fe0"/><rect x="2613.3" y="1394.0" width="3.2" height="56.2" fill="#4aa67d"/><rect x="2619.8" y="1446.9" width="3.8" height="3.3" fill="#1d8fe0"/><rect x="2623.5" y="1389.2" width="3.2" height="61.0" fill="#4aa67d"/><rect x="2630.0" y="1446.5" width="3.8" height="3.7" fill="#1d8fe0"/><rect x="2633.7" y="1400.0" width="3.2" height="50.2" fill="#4aa67d"/><rect x="2640.2" y="1439.4" width="3.8" height="10.8" fill="#1d8fe0"/><rect x="2643.8" y="1379.5" width="3.2" height="70.7" fill="#4aa67d"/><rect x="2650.4" y="1441.6" width="3.8" height="8.6" fill="#1d8fe0"/><rect x="2654.0" y="1403.2" width="3.2" height="47.0" fill="#4aa67d"/><rect x="2660.5" y="1444.1" width="3.8" height="6.1" fill="#1d8fe0"/><rect x="2664.2" y="1397.0" width="3.2" height="53.2" fill="#4aa67d"/><rect x="2670.7" y="1439.4" width="3.8" height="10.8" fill="#1d8fe0"/><rect x="2674.4" y="1400.0" width="3.2" height="50.2" fill="#4aa67d"/><rect x="2680.9" y="1439.0" width="3.8" height="11.2" fill="#1d8fe0"/><rect x="2684.6" y="1310.7" width="3.2" height="139.5" fill="#4aa67d"/><rect x="2691.1" y="1439.4" width="3.8" height="10.8" fill="#1d8fe0"/><rect x="2694.7" y="1339.0" width="3.2" height="111.2" fill="#4aa67d"/><rect x="2701.3" y="1442.2" width="3.8" height="8.0" fill="#1d8fe0"/><rect x="2704.9" y="1332.9" width="3.2" height="117.3" fill="#4aa67d"/><rect x="2711.5" y="1442.2" width="3.8" height="8.0" fill="#1d8fe0"/><rect x="2715.1" y="1254.4" width="3.2" height="195.8" fill="#4aa67d"/><rect x="2721.6" y="1440.3" width="3.8" height="9.9" fill="#1d8fe0"/><rect x="2725.3" y="1318.9" width="3.2" height="131.3" fill="#4aa67d"/><rect x="2731.8" y="1437.2" width="3.8" height="13.0" fill="#1d8fe0"/><rect x="2735.5" y="1336.2" width="3.2" height="114.0" fill="#4aa67d"/><rect x="2742.0" y="1437.6" width="3.8" height="12.6" fill="#1d8fe0"/><rect x="2745.6" y="1337.5" width="3.2" height="112.7" fill="#4aa67d"/><rect x="2752.2" y="1440.3" width="3.8" height="9.9" fill="#1d8fe0"/><rect x="2755.8" y="1315.8" width="3.2" height="134.4" fill="#4aa67d"/><rect x="2762.4" y="1442.2" width="3.8" height="8.0" fill="#1d8fe0"/><rect x="2766.0" y="1357.6" width="3.2" height="92.6" fill="#4aa67d"/><rect x="2772.5" y="1445.4" width="3.8" height="4.8" fill="#1d8fe0"/><rect x="2776.2" y="1412.5" width="3.2" height="37.7" fill="#4aa67d"/><rect x="2782.7" y="1437.6" width="3.8" height="12.6" fill="#1d8fe0"/><rect x="2786.4" y="1318.9" width="3.2" height="131.3" fill="#4aa67d"/><rect x="2792.9" y="1444.1" width="3.8" height="6.1" fill="#1d8fe0"/><rect x="2796.5" y="1387.9" width="3.2" height="62.3" fill="#4aa67d"/><rect x="2803.1" y="1437.6" width="3.8" height="12.6" fill="#1d8fe0"/><rect x="2806.7" y="1369.1" width="3.2" height="81.1" fill="#4aa67d"/><rect x="2813.3" y="1445.4" width="3.8" height="4.8" fill="#1d8fe0"/><rect x="2816.9" y="1372.1" width="3.2" height="78.1" fill="#4aa67d"/><rect x="2823.4" y="1436.1" width="3.8" height="14.1" fill="#1d8fe0"/><rect x="2827.1" y="1331.2" width="3.2" height="119.0" fill="#4aa67d"/><rect x="2833.6" y="1444.1" width="3.8" height="6.1" fill="#1d8fe0"/><rect x="2837.3" y="1395.2" width="3.2" height="55.0" fill="#4aa67d"/><rect x="2843.8" y="1436.1" width="3.8" height="14.1" fill="#1d8fe0"/><rect x="2847.4" y="1375.3" width="3.2" height="74.9" fill="#4aa67d"/><rect x="2854.0" y="1434.8" width="3.8" height="15.4" fill="#1d8fe0"/><rect x="2857.6" y="1237.7" width="3.2" height="212.5" fill="#4aa67d"/><rect x="2864.2" y="1439.4" width="3.8" height="10.8" fill="#1d8fe0"/><rect x="2867.8" y="1300.0" width="3.2" height="150.2" fill="#4aa67d"/><rect x="2874.3" y="1444.1" width="3.8" height="6.1" fill="#1d8fe0"/><rect x="2878.0" y="1345.7" width="3.2" height="104.5" fill="#4aa67d"/><rect x="2884.5" y="1437.6" width="3.8" height="12.6" fill="#1d8fe0"/><rect x="2888.2" y="1284.3" width="3.2" height="165.9" fill="#4aa67d"/><rect x="2894.7" y="1436.1" width="3.8" height="14.1" fill="#1d8fe0"/><rect x="2898.3" y="1329.7" width="3.2" height="120.5" fill="#4aa67d"/><rect x="2904.9" y="1434.8" width="3.8" height="15.4" fill="#1d8fe0"/><rect x="2908.5" y="1303.7" width="3.2" height="146.5" fill="#4aa67d"/><rect x="2915.1" y="1440.9" width="3.8" height="9.3" fill="#1d8fe0"/><rect x="2918.7" y="1379.5" width="3.2" height="70.7" fill="#4aa67d"/><rect x="2925.2" y="1431.0" width="3.8" height="19.2" fill="#1d8fe0"/><rect x="2928.9" y="1278.0" width="3.2" height="172.2" fill="#4aa67d"/><rect x="2935.4" y="1440.9" width="3.8" height="9.3" fill="#1d8fe0"/><rect x="2939.1" y="1339.0" width="3.2" height="111.2" fill="#4aa67d"/><rect x="2945.6" y="1437.6" width="3.8" height="12.6" fill="#1d8fe0"/><rect x="2949.2" y="1318.9" width="3.2" height="131.3" fill="#4aa67d"/><rect x="2955.8" y="1442.2" width="3.8" height="8.0" fill="#1d8fe0"/><rect x="2959.4" y="1353.1" width="3.2" height="97.1" fill="#4aa67d"/><rect x="2966.0" y="1427.9" width="3.8" height="22.3" fill="#1d8fe0"/><rect x="2969.6" y="1278.0" width="3.2" height="172.2" fill="#4aa67d"/><rect x="2976.1" y="1439.4" width="3.8" height="10.8" fill="#1d8fe0"/><rect x="2979.8" y="1329.3" width="3.2" height="120.9" fill="#4aa67d"/><rect x="2986.3" y="1444.1" width="3.8" height="6.1" fill="#1d8fe0"/><rect x="2990.0" y="1347.2" width="3.2" height="103.0" fill="#4aa67d"/><rect x="2562.3" y="1446.9" width="3.2" height="4" fill="#4aa67d"/><rect x="2388.6" y="1445.6" width="3.4" height="4" fill="#4aa67d"/><rect x="2395.5" y="1448" width="3" height="1.6" fill="#8a8d91"/><rect x="2399.1" y="1448" width="3" height="1.6" fill="#8a8d91"/><rect x="2409.5" y="1448" width="3" height="1.6" fill="#8a8d91"/><rect x="2501.4" y="1448" width="3" height="1.6" fill="#8a8d91"/></svg>
<div style="position:absolute;left:667.0px;top:1572.0px;width:446.8px;height:226.0px;box-sizing:border-box;border:2px solid #323438;border-radius:24px;background:#17181c"></div>
<div class="t" style="left:707.4px;top:1612.1px;font-size:37.79px;font-weight:700;color:#c2c4c8;transform:scaleX(0.9223);">Verified followers</div>
<div class="t" style="left:706.4px;top:1685.3px;font-size:75.87px;font-weight:700;color:#e7e9ea;transform:scaleX(1.1146);">486</div>
<div class="t" style="left:867.0px;top:1720.0px;font-size:34.88px;color:#e7e9ea;transform:scaleX(1.0191);-webkit-text-stroke:0.5px #e7e9ea">/ 8.4K</div>
<div style="position:absolute;left:1151.2px;top:1572.0px;width:446.8px;height:226.0px;box-sizing:border-box;border:2px solid #323438;border-radius:24px;background:#17181c"></div>
<div class="t" style="left:1189.6px;top:1612.1px;font-size:37.79px;font-weight:700;color:#c2c4c8;transform:scaleX(0.9128);">Impressions</div>
<div class="t" style="left:1190.7px;top:1685.3px;font-size:75.87px;font-weight:700;color:#e7e9ea;transform:scaleX(1.0672);">4.3M</div>
<svg style="position:absolute;left:0px;top:0px;overflow:visible" width="3360" height="2100" viewBox="0 0 3360 2100"><path d="M1401.85 1750.3 V1725.0 M1393.3 1733.5 L1401.85 1725.0 L1410.3999999999999 1733.5" fill="none" stroke="#53c793" stroke-width="3.4"/></svg>
<div class="t" style="left:1417.5px;top:1719.7px;font-size:35.17px;color:#53c793;transform:scaleX(0.9221);-webkit-text-stroke:0.8px #53c793">129K%</div>
<div style="position:absolute;left:1635.5px;top:1572.0px;width:446.8px;height:226.0px;box-sizing:border-box;border:2px solid #323438;border-radius:24px;background:#17181c"></div>
<div class="t" style="left:1673.8px;top:1612.1px;font-size:37.79px;font-weight:700;color:#c2c4c8;transform:scaleX(0.9183);">Engagement rate</div>
<div class="t" style="left:1674.4px;top:1685.3px;font-size:75.87px;font-weight:700;color:#e7e9ea;transform:scaleX(1.0198);">3.3%</div>
<svg style="position:absolute;left:0px;top:0px;overflow:visible" width="3360" height="2100" viewBox="0 0 3360 2100"><path d="M1881.75 1724.0 V1748.7 M1873.2 1740.2 L1881.75 1748.7 L1890.3 1740.2" fill="none" stroke="#e8535c" stroke-width="3.4"/></svg>
<div class="t" style="left:1898.1px;top:1719.7px;font-size:35.17px;color:#e8535c;transform:scaleX(1.0144);-webkit-text-stroke:0.8px #e8535c">-24%</div>
<div style="position:absolute;left:2119.8px;top:1572.0px;width:446.8px;height:226.0px;box-sizing:border-box;border:2px solid #323438;border-radius:24px;background:#17181c"></div>
<div class="t" style="left:2158.1px;top:1612.1px;font-size:37.79px;font-weight:700;color:#c2c4c8;transform:scaleX(0.9113);">Engagements</div>
<div class="t" style="left:2155.6px;top:1685.3px;font-size:75.87px;font-weight:700;color:#e7e9ea;transform:scaleX(1.0063);">145.3K</div>
<svg style="position:absolute;left:0px;top:0px;overflow:visible" width="3360" height="2100" viewBox="0 0 3360 2100"><path d="M2435.05 1750.3 V1725.0 M2426.5 1733.5 L2435.05 1725.0 L2443.6000000000004 1733.5" fill="none" stroke="#53c793" stroke-width="3.4"/></svg>
<div class="t" style="left:2450.7px;top:1719.7px;font-size:35.17px;color:#53c793;transform:scaleX(0.9590);-webkit-text-stroke:0.8px #53c793">98K%</div>
<div style="position:absolute;left:2604.0px;top:1572.0px;width:446.8px;height:226.0px;box-sizing:border-box;border:2px solid #323438;border-radius:24px;background:#17181c"></div>
<div class="t" style="left:2642.3px;top:1612.1px;font-size:37.79px;font-weight:700;color:#c2c4c8;transform:scaleX(0.9126);">Profile visits</div>
<div class="t" style="left:2641.9px;top:1685.3px;font-size:75.87px;font-weight:700;color:#e7e9ea;transform:scaleX(1.0435);">29.4K</div>
<svg style="position:absolute;left:0px;top:0px;overflow:visible" width="3360" height="2100" viewBox="0 0 3360 2100"><path d="M2885.75 1750.3 V1725.0 M2877.2 1733.5 L2885.75 1725.0 L2894.3 1733.5" fill="none" stroke="#53c793" stroke-width="3.4"/></svg>
<div class="t" style="left:2902.0px;top:1719.7px;font-size:35.17px;color:#53c793;transform:scaleX(0.9612);-webkit-text-stroke:0.8px #53c793">98K%</div>
<div style="position:absolute;left:667.0px;top:1836.0px;width:446.8px;height:226.0px;box-sizing:border-box;border:2px solid #323438;border-radius:24px;background:#17181c"></div>
<div class="t" style="left:705.3px;top:1876.1px;font-size:37.79px;font-weight:700;color:#c2c4c8;transform:scaleX(0.9222);">Replies</div>
<div class="t" style="left:705.4px;top:1949.3px;font-size:75.87px;font-weight:700;color:#e7e9ea;transform:scaleX(0.9507);">5.1K</div>
<svg style="position:absolute;left:0px;top:0px;overflow:visible" width="3360" height="2100" viewBox="0 0 3360 2100"><path d="M889.95 2014.3 V1989.0 M881.4000000000001 1997.5 L889.95 1989.0 L898.5 1997.5" fill="none" stroke="#53c793" stroke-width="3.4"/></svg>
<div class="t" style="left:906.7px;top:1983.7px;font-size:35.17px;color:#53c793;transform:scaleX(0.9206);-webkit-text-stroke:0.8px #53c793">518K%</div>
<div style="position:absolute;left:1151.2px;top:1836.0px;width:446.8px;height:226.0px;box-sizing:border-box;border:2px solid #323438;border-radius:24px;background:#17181c"></div>
<div class="t" style="left:1189.6px;top:1876.1px;font-size:37.79px;font-weight:700;color:#c2c4c8;transform:scaleX(0.8914);">Likes</div>
<div class="t" style="left:1190.8px;top:1949.3px;font-size:75.87px;font-weight:700;color:#e7e9ea;transform:scaleX(0.9843);">41.6K</div>
<svg style="position:absolute;left:0px;top:0px;overflow:visible" width="3360" height="2100" viewBox="0 0 3360 2100"><path d="M1422.75 2014.3 V1989.0 M1414.2 1997.5 L1422.75 1989.0 L1431.3 1997.5" fill="none" stroke="#53c793" stroke-width="3.4"/></svg>
<div class="t" style="left:1437.9px;top:1983.7px;font-size:35.17px;color:#53c793;transform:scaleX(0.9235);-webkit-text-stroke:0.8px #53c793">219K%</div>
<div style="position:absolute;left:1635.5px;top:1836.0px;width:446.8px;height:226.0px;box-sizing:border-box;border:2px solid #323438;border-radius:24px;background:#17181c"></div>
<div class="t" style="left:1673.8px;top:1876.1px;font-size:37.79px;font-weight:700;color:#c2c4c8;transform:scaleX(0.9241);">Reposts</div>
<div class="t" style="left:1674.4px;top:1949.3px;font-size:75.87px;font-weight:700;color:#e7e9ea;transform:scaleX(1.0300);">3.4K</div>
<svg style="position:absolute;left:0px;top:0px;overflow:visible" width="3360" height="2100" viewBox="0 0 3360 2100"><path d="M1871.75 2014.3 V1989.0 M1863.2 1997.5 L1871.75 1989.0 L1880.3 1997.5" fill="none" stroke="#53c793" stroke-width="3.4"/></svg>
<div class="t" style="left:1887.3px;top:1983.7px;font-size:35.17px;color:#53c793;transform:scaleX(0.9258);-webkit-text-stroke:0.8px #53c793">10K%</div>
<div style="position:absolute;left:2119.8px;top:1836.0px;width:446.8px;height:226.0px;box-sizing:border-box;border:2px solid #323438;border-radius:24px;background:#17181c"></div>
<div class="t" style="left:2158.1px;top:1876.1px;font-size:37.79px;font-weight:700;color:#c2c4c8;transform:scaleX(0.9143);">Bookmarks</div>
<div class="t" style="left:2158.6px;top:1949.3px;font-size:75.87px;font-weight:700;color:#e7e9ea;transform:scaleX(1.0367);">36.4K</div>
<svg style="position:absolute;left:0px;top:0px;overflow:visible" width="3360" height="2100" viewBox="0 0 3360 2100"><path d="M2401.35 2014.3 V1989.0 M2392.7999999999997 1997.5 L2401.35 1989.0 L2409.9 1997.5" fill="none" stroke="#53c793" stroke-width="3.4"/></svg>
<div class="t" style="left:2416.5px;top:1983.7px;font-size:35.17px;color:#53c793;transform:scaleX(0.9869);-webkit-text-stroke:0.8px #53c793">260K%</div>
<div style="position:absolute;left:2604.0px;top:1836.0px;width:446.8px;height:226.0px;box-sizing:border-box;border:2px solid #323438;border-radius:24px;background:#17181c"></div>
<div class="t" style="left:2643.6px;top:1876.1px;font-size:37.79px;font-weight:700;color:#c2c4c8;transform:scaleX(0.9109);">Shares</div>
<div class="t" style="left:2640.1px;top:1949.3px;font-size:75.87px;font-weight:700;color:#e7e9ea;transform:scaleX(0.9656);">1.5K</div>
<svg style="position:absolute;left:0px;top:0px;overflow:visible" width="3360" height="2100" viewBox="0 0 3360 2100"><path d="M2826.75 2014.3 V1989.0 M2818.2 1997.5 L2826.75 1989.0 L2835.3 1997.5" fill="none" stroke="#53c793" stroke-width="3.4"/></svg>
<div class="t" style="left:2842.2px;top:1983.7px;font-size:35.17px;color:#53c793;transform:scaleX(0.9075);-webkit-text-stroke:0.8px #53c793">157K%</div>
<svg style="position:absolute;left:0px;top:0px;overflow:visible" width="3360" height="2100" viewBox="0 0 3360 2100"><polygon points="1037.65,1630.40 1037.44,1631.39 1036.87,1632.31 1036.08,1633.13 1035.24,1633.86 1034.54,1634.54 1034.08,1635.26 1033.90,1636.09 1033.91,1637.07 1033.99,1638.18 1033.97,1639.32 1033.72,1640.37 1033.17,1641.22 1032.32,1641.77 1031.27,1642.02 1030.13,1642.04 1029.02,1641.96 1028.04,1641.95 1027.21,1642.13 1026.49,1642.59 1025.81,1643.29 1025.08,1644.13 1024.26,1644.92 1023.34,1645.49 1022.35,1645.70 1021.36,1645.49 1020.44,1644.92 1019.62,1644.13 1018.89,1643.29 1018.21,1642.59 1017.49,1642.13 1016.66,1641.95 1015.68,1641.96 1014.57,1642.04 1013.43,1642.02 1012.38,1641.77 1011.53,1641.22 1010.98,1640.37 1010.73,1639.32 1010.71,1638.18 1010.79,1637.07 1010.80,1636.09 1010.62,1635.26 1010.16,1634.54 1009.46,1633.86 1008.62,1633.13 1007.83,1632.31 1007.26,1631.39 1007.05,1630.40 1007.26,1629.41 1007.83,1628.49 1008.62,1627.67 1009.46,1626.94 1010.16,1626.26 1010.62,1625.54 1010.80,1624.71 1010.79,1623.73 1010.71,1622.62 1010.73,1621.48 1010.98,1620.43 1011.53,1619.58 1012.38,1619.03 1013.43,1618.78 1014.57,1618.76 1015.68,1618.84 1016.66,1618.85 1017.49,1618.67 1018.21,1618.21 1018.89,1617.51 1019.62,1616.67 1020.44,1615.88 1021.36,1615.31 1022.35,1615.10 1023.34,1615.31 1024.26,1615.88 1025.08,1616.67 1025.81,1617.51 1026.49,1618.21 1027.21,1618.67 1028.04,1618.85 1029.02,1618.84 1030.13,1618.76 1031.27,1618.78 1032.32,1619.03 1033.17,1619.58 1033.72,1620.43 1033.97,1621.48 1033.99,1622.62 1033.91,1623.73 1033.90,1624.71 1034.08,1625.54 1034.54,1626.26 1035.24,1626.94 1036.08,1627.67 1036.87,1628.49 1037.44,1629.41" fill="#1d9bf0"/><path d="M1014.70 1630.86 L1020.21 1636.06 L1029.24 1625.81" fill="none" stroke="#0f1419" stroke-width="3.06"/></svg>
</body></html>
